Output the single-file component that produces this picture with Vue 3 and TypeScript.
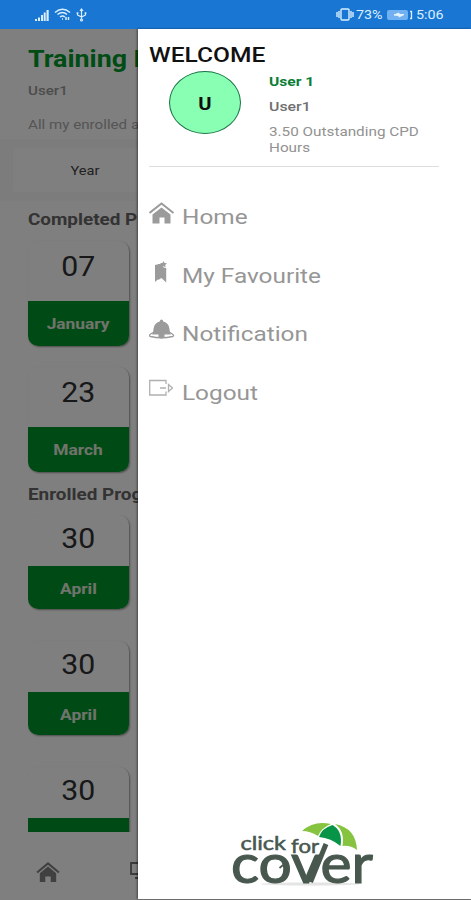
<script setup lang="ts">
interface DateCard { day: string; month: string }
interface MenuItem { icon: string; label: string }

const completed: DateCard[] = [
  { day: '07', month: 'January' },
  { day: '23', month: 'March' },
]
const enrolled: DateCard[] = [
  { day: '30', month: 'April' },
  { day: '30', month: 'April' },
  { day: '30', month: '' },
]
const menu: MenuItem[] = [
  { icon: 'home', label: 'Home' },
  { icon: 'bookmark', label: 'My Favourite' },
  { icon: 'bell', label: 'Notification' },
  { icon: 'logout', label: 'Logout' },
]
</script>

<template>
  <div class="screen">
    <header class="status">
      <div class="status-left">
        <svg width="14" height="12" viewBox="0 0 14 12" fill="#d9efff">
          <path d="M0 10h2v2H0zM3 8.500h2V12H3zM6 6h2v6H6zM8.700 3.500h2V12h-2zM11.500 1h2.200v11h-2.200z" />
        </svg>
        <svg width="17" height="13" viewBox="0 0 17 13" fill="none" stroke="#d9efff" stroke-width="1.500">
          <path d="M1 4.500Q8.500-2 16 4.500M3.500 6.500Q8.500 2.500 13 6.500M6 9Q8.500 7 11 9" />
          <path d="M8 11h1M12 9v3M14.500 9v3" />
        </svg>
        <svg width="11" height="14" viewBox="0 0 11 14" fill="none" stroke="#d9efff" stroke-width="1.200">
          <path d="M5.500 1v10M1.500 4.500V7l4 2 4-2V4.500" />
          <circle cx="5.500" cy="12" r="1" /><path d="M4 3l1.500-2L7 3M.5 5h2M8.500 5h2" />
        </svg>
      </div>
      <div class="status-right">
        <svg width="18" height="13" viewBox="0 0 18 13" fill="none" stroke="#d9efff" stroke-width="1.400">
          <rect x="5" y="1" width="8" height="11" rx="1" /><path d="M3 3v7M1 4v5M15 3v7M17 4v5" />
        </svg>
        <span class="st pct">73%</span>
        <svg width="26" height="10" viewBox="0 0 26 10">
          <rect width="21" height="10" rx="2" fill="#72b1f1" />
          <path d="M7 5l5-2v1.500h5L12 7V5.500z" fill="#e6f5ff" stroke="#e6f5ff" />
          <path d="M23 1.500h1.500v7H23" fill="none" stroke="#d9efff" stroke-width="1.300" />
        </svg>
        <span class="st clock">5:06</span>
      </div>
    </header>

    <div class="body">
      <main class="page">
        <h1 class="title"><span class="wide">Training Dashboard</span></h1>
        <p class="user"><span class="wide">User1</span></p>
        <p class="intro"><span class="wide">All my enrolled and</span></p>
        <div class="filter"><div class="tab"><span class="wide center">Year</span></div></div>
        <h2 class="heading first"><span class="wide">Completed Programs</span></h2>
        <section class="cards">
          <article v-for="(c, i) in completed" :key="i" class="card">
            <div class="day"><span class="wide center">{{ c.day }}</span></div>
            <div class="month"><span class="wide center">{{ c.month }}</span></div>
          </article>
        </section>
        <h2 class="heading second"><span class="wide">Enrolled Programs</span></h2>
        <section class="cards enrolled">
          <article v-for="(c, i) in enrolled" :key="i" class="card">
            <div class="day"><span class="wide center">{{ c.day }}</span></div>
            <div class="month"><span class="wide center">{{ c.month }}</span></div>
          </article>
        </section>
        <nav class="tabbar">
          <svg width="24" height="20" viewBox="0 0 26 22" fill="#808080">
            <path d="M1 11.500L13 1.500l12 10" fill="none" stroke="#808080" stroke-width="2.300" />
            <path d="M4 12.500L13 5l9 7.500V22h-6v-6h-6v6H4z" />
          </svg>
          <svg width="20" height="18" viewBox="0 0 20 18" fill="none" stroke="#767676" stroke-width="1.800">
            <path d="M1 1h18v11H1zM5 16h10M10 12v4" />
          </svg>
        </nav>
      </main>
      <div class="scrim"></div>

      <aside class="drawer">
        <div class="welcome"><span class="wide">WELCOME</span></div>
        <div class="profile">
          <div class="avatar"><span class="wide center">U</span></div>
          <div class="info">
            <div class="name"><span class="wide">User 1</span></div>
            <div class="login"><span class="wide">User1</span></div>
            <div class="cpd"><span class="wide">3.50 Outstanding CPD<br>Hours</span></div>
          </div>
        </div>
        <ul class="menu">
          <li v-for="m in menu" :key="m.label">
            <svg v-if="m.icon === 'home'" width="26" height="22" viewBox="0 0 26 22" fill="#9b9b9b">
              <path d="M.5 11L12.500 1.500l12 9.500" fill="none" stroke="#9b9b9b" stroke-width="2" />
              <path d="M3.500 12.500l9-7 9 7V21.500h-6v-6h-5v6h-7z" />
            </svg>
            <svg v-else-if="m.icon === 'bookmark'" width="26" height="22" viewBox="0 0 26 22" fill="#9b9b9b">
              <path d="M6 4l3-.8v15L6 21zM9 3H13q0 4 4.200 4V21.500L12.500 17l-3.500 2z" />
              <path d="M14.500 0l1 2 2.500.3-1.800 1.600.4 2.400-2.100-1.100-2.200 1.100.4-2.400-1.700-1.600 2.500-.3z" />
            </svg>
            <svg v-else-if="m.icon === 'bell'" width="26" height="22" viewBox="0 0 26 22" fill="#9b9b9b">
              <path d="M12.500 .5q1.500 0 1.800 2Q20 4 20.500 10q0 3 1.500 5.500H3q1.500-2.500 1.500-5.500Q5 4 10.700 2.500q.3-2 1.800-2z" />
              <path d="M4 13.500Q-1.500 16.500 1.500 17.500q11 2.500 22 0 3-1-2.500-4" fill="none" stroke="#9b9b9b" stroke-width="1.400" />
              <path d="M9.500 15h6v3q-3 3-6 0z" />
            </svg>
            <svg v-else width="26" height="22" viewBox="0 0 26 22" fill="none" stroke="#b0b0b0" stroke-width="1.300">
              <path d="M17 6V2.500H.7v14.500H17v-3.500M11 10h6" />
              <path d="M19.500 6.500l4 3.500-4 3.500z" />
            </svg>
            <span class="wide">{{ m.label }}</span>
          </li>
        </ul>
        <svg class="logo" width="150" height="72" viewBox="228 818 150 72">
          <ellipse cx="310" cy="884" rx="50" ry="1.500" fill="#e4e4e4" />
          <path d="M302 831Q314 820 331 824Q321 828 318 836Q310 831 302 831z" fill="#86c440" />
          <path d="M335 824Q356 828 357 850Q350 845 342.500 846Q345 831 335 824z" fill="#86c440" />
          <path d="M332.500 825Q343 831 340.500 846Q331 838 319 837Q322 828 332.500 825z" fill="#079447" />
          <text x="240.500" y="850" class="small" textLength="45.500" lengthAdjust="spacingAndGlyphs">click</text>
          <text x="291" y="852.500" class="small" textLength="28" lengthAdjust="spacingAndGlyphs">for</text>
          <text x="231" y="882.500" class="big" textLength="142" lengthAdjust="spacingAndGlyphs">cover</text>
          <path d="M310.500 882L326 844" stroke="#48584f" stroke-width="5" />
          <path d="M279.500 868l6-5" stroke="#48584f" stroke-width="1.700" />
        </svg>
      </aside>
    </div>
  </div>
</template>

<style>
body { background: #fff; overflow: hidden; }
</style>

<style scoped>
* { box-sizing: border-box; }
.screen { width: 471px; height: 900px; overflow: hidden; display: flex; flex-direction: column; font-family: Roboto, "Liberation Sans", sans-serif; }
h1, h2, p, ul { margin: 0; padding: 0; font-weight: inherit; }
.wide { display: inline-block; white-space: nowrap; transform: scaleX(1.165); transform-origin: left center; }
.center { transform: scaleX(1.12); transform-origin: center; }
.status { height: 29px; flex: none; background: #1976d2; display: flex; justify-content: space-between; padding: 0 25px 0 35px; }
.status-left, .status-right { display: flex; align-items: center; }
.status-left { gap: 5px; }
.status-right { gap: 2px; }
.st { color: #d9efff; font-size: 13px; line-height: 29px; transform: scaleX(1.1); transform-origin: left; white-space: nowrap; }
.pct { width: 29px; }
.clock { width: 29px; margin-left: 1px; margin-right: 1px; }
.body { position: relative; height: 871px; }
.page { height: 871px; display: flex; flex-direction: column; color: #333; background: #fff; }
.scrim { position: absolute; inset: 0; background: rgba(0, 0, 0, .5); }
.title { margin: 17px 0 0 28px; font-size: 23px; line-height: 28px; font-weight: 700; color: #00982b; }
.user { margin: 9px 0 0 28px; font-size: 13px; line-height: 16px; font-weight: 500; color: #999; }
.intro { margin: 17px 0 0 28px; font-size: 13px; line-height: 18px; color: #aaa; }
.filter { margin-top: 5px; height: 62px; background: #f8f8f8; padding: 9px 0 9px 13px; }
.tab { width: 143px; height: 44px; background: #fff; border-radius: 4px; text-align: center; font-size: 13px; line-height: 46px; color: #444; }
.heading { padding-left: 28px; font-size: 16px; line-height: 20px; font-weight: 700; color: #666; }
.heading .wide { transform: scaleX(1.18); }
.first { margin-top: 9px; }
.second { margin-top: 13px; }
.cards { margin: 11px 0 0 28px; display: flex; flex-direction: column; gap: 21px; }
.card { width: 101px; height: 105px; flex: none; border-radius: 10px; overflow: hidden; box-shadow: 1px 1px 2px rgba(0, 0, 0, .4); text-align: center; background: #fff; display: flex; flex-direction: column; }
.day { height: 60px; font-size: 27px; line-height: 53px; color: #303030; }
.month { height: 45px; background: #00962a; color: #e0e8da; font-size: 15.500px; line-height: 47px; font-weight: 700; }
.enrolled { margin-top: 10px; gap: 31px; height: 317px; overflow: hidden; width: 106px; }
.enrolled .card { height: 94px; margin-bottom: 1px; }
.enrolled .day { height: 51px; line-height: 49px; }
.enrolled .month { height: 43px; line-height: 46px; }
.tabbar { padding: 30px 0 0 36px; display: flex; gap: 70px; }
.drawer { position: absolute; left: 138px; top: 0; width: 333px; height: 870px; background: #fff; display: flex; flex-direction: column; padding-left: 11px; box-shadow: -1px 0 2px rgba(0, 0, 0, .45); }
.welcome { margin-top: 14px; font-size: 21px; line-height: 24px; font-weight: 500; color: #111; }
.welcome .wide { transform: scaleX(1.17); line-height: 22px; }
.profile { height: 100px; width: 290px; border-bottom: 1px solid #dedede; display: flex; }
.avatar { margin: 4px 0 0 20px; width: 72px; height: 63px; flex: none; border: 1px solid #197245; border-radius: 50%; background: #88ffb2; color: #111; text-align: center; font-size: 18px; font-weight: 700; line-height: 63px; }
.info { margin-left: 28px; }
.name, .login { font-size: 13px; line-height: 16px; font-weight: 700; color: #0c7e36; margin-top: 7px; }
.name .wide { transform: scaleX(1.2); }
.login { margin-top: 9px; color: #707070; font-weight: 500; }
.login .wide { transform: scaleX(1.22); }
.cpd { margin-top: 9px; font-size: 13px; line-height: 16px; color: #929292; }
.cpd .wide { transform: scaleX(1.175); }
.menu { list-style: none; margin-top: 35px; flex: 1; color: #969696; font-size: 21px; }
.menu li { height: 58.700px; display: flex; gap: 7px; line-height: 30px; }
.menu .wide { transform: scaleX(1.16); }
.menu svg { flex: none; width: 26px; }
.logo { margin: 0 0 9px 79px; flex: none; }
.small { font: 400 19px Lato, sans-serif; fill: #48584f; stroke: #48584f; stroke-width: .5px; }
.big { font: 400 54px Lato, sans-serif; fill: #48584f; stroke: #48584f; stroke-width: 1.2px; }
</style>
